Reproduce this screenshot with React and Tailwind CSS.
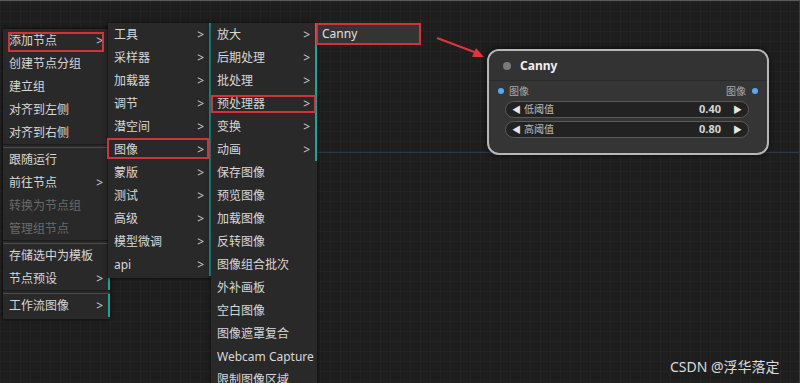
import React from "react";

const font = { fontFamily: '"Noto Sans", "Noto Sans CJK SC", sans-serif' };

const menu1 = [
  { label: "添加节点", sub: true },
  { label: "创建节点分组" },
  { label: "建立组" },
  { label: "对齐到左侧" },
  { label: "对齐到右侧" },
  { sep: true },
  { label: "跟随运行" },
  { label: "前往节点", sub: true },
  { label: "转换为节点组", disabled: true },
  { label: "管理组节点", disabled: true },
  { sep: true },
  { label: "存储选中为模板" },
  { label: "节点预设", sub: true },
  { sep: true },
  { label: "工作流图像", sub: true },
];

const menu2 = ["工具", "采样器", "加载器", "调节", "潜空间", "图像", "蒙版", "测试", "高级", "模型微调", "api"].map(
  (label) => ({ label, sub: true })
);

const menu3 = [
  { label: "放大", sub: true },
  { label: "后期处理", sub: true },
  { label: "批处理", sub: true },
  { label: "预处理器", sub: true },
  { label: "变换", sub: true },
  { label: "动画", sub: true },
  { label: "保存图像" },
  { label: "预览图像" },
  { label: "加载图像" },
  { label: "反转图像" },
  { label: "图像组合批次" },
  { label: "外补画板" },
  { label: "空白图像" },
  { label: "图像遮罩复合" },
  { label: "Webcam Capture" },
  { label: "限制图像区域" },
];

const MenuItem = ({ item }) => {
  if (item.sep) {
    return <div className="h-[4px] border-t border-[#1a1a1a] border-b border-b-[#4a4a4a]" />;
  }
  return (
    <div
      className={`h-[23px] flex items-center pl-[6px] pr-[5px] text-[12px] whitespace-nowrap ${
        item.disabled ? "text-[#6a6a6a]" : "text-[#d8d8d8]"
      } ${item.sub ? "border-r-2 border-[#18a59c]" : ""}`}
    >
      <span>{item.label}</span>
      {item.sub && <span className="ml-auto text-[12px] text-[#cfcfcf]">&gt;</span>}
    </div>
  );
};

const Menu = ({ items, className }) => (
  <div className={`absolute bg-[#292929] shadow-[0_0_4px_rgba(0,0,0,0.8)] ${className}`}>
    {items.map((it, i) => (
      <MenuItem key={i} item={it} />
    ))}
  </div>
);

const RedBox = ({ className }) => (
  <div className={`absolute border-2 border-[#d2333a] pointer-events-none ${className}`} />
);

const Widget = ({ label, value }) => (
  <div className="h-[17px] rounded-full bg-[#222222] border border-[#5a5a5a] flex items-center px-[6px] text-[10px] text-[#bdbdbd]">
    <span className="text-[9px] text-[#e6e6e6]">◀</span>
    <span className="ml-[3px]">{label}</span>
    <span className="ml-auto text-[11px] font-bold text-[#d6d6d6]">{value}</span>
    <span className="ml-[12px] text-[9px] text-[#e6e6e6]">▶</span>
  </div>
);

export default function App() {
  return (
    <div
      className="relative w-[800px] h-[383px] overflow-hidden bg-[#1e1e1e] bg-[linear-gradient(rgba(255,255,255,0.025)_1px,transparent_1px),linear-gradient(90deg,rgba(255,255,255,0.025)_1px,transparent_1px)] bg-[size:10px_10px] border-t border-[#5a5a5a] border-r border-r-[#3a3a3a]"
      style={font}
    >
      {/* link line */}
      <div className="absolute left-[317px] right-0 top-[151px] h-px bg-[#2c3a48]" />

      <Menu items={menu1} className="left-[3px] top-[28px] w-[107px] pb-[2px]" />
      <Menu items={menu2} className="left-[108px] top-[22px] w-[103px] pb-[2px]" />
      <Menu items={menu3} className="left-[211px] top-[22px] w-[106px]" />
      <div className="absolute left-[316px] top-[22px] w-[104px] h-[21px] bg-[#343434] flex items-center pl-[6px] text-[12px] text-[#e0e0e0]">
        Canny
      </div>

      <RedBox className="left-[8px] top-[31px] w-[96px] h-[20px]" />
      <RedBox className="left-[107px] top-[137px] w-[102px] h-[21px]" />
      <RedBox className="left-[211px] top-[94px] w-[105px] h-[18px]" />
      <RedBox className="left-[316px] top-[22px] w-[105px] h-[22px]" />

      <svg className="absolute left-[430px] top-[30px]" width="60" height="32" viewBox="0 0 60 32">
        <line x1="7" y1="7" x2="47" y2="22" stroke="#e03535" strokeWidth="2" />
        <polygon points="54,26 42,26 46,17" fill="#e03535" />
      </svg>

      {/* node */}
      <div className="absolute left-[487px] top-[48px] w-[282px] h-[106px] rounded-[12px] border-2 border-[#b8b8b8] bg-[#353535] shadow-[0_0_6px_rgba(0,0,0,0.7)]">
        <div className="h-[30px] flex items-center pl-[14px] border-b border-[#2a2a2a] bg-[#333333] rounded-t-[10px]">
          <span className="w-[8px] h-[8px] rounded-full bg-[#7a7a7a]" />
          <span className="ml-[9px] text-[12px] font-bold text-[#f0f0f0]">Canny</span>
        </div>
        <div className="h-[20px] flex items-center pl-[9px] pr-[9px] text-[10px] text-[#a8a8a8]">
          <span className="w-[6px] h-[6px] rounded-full bg-[#5aa8ee]" />
          <span className="ml-[5px]">图像</span>
          <span className="ml-auto">图像</span>
          <span className="ml-[6px] w-[6px] h-[6px] rounded-full bg-[#5aa8ee]" />
        </div>
        <div className="flex flex-col gap-[3px] px-[16px] pr-[18px]">
          <Widget label="低阈值" value="0.40" />
          <Widget label="高阈值" value="0.80" />
        </div>
      </div>

      <div className="absolute left-[670px] top-[355px] text-[14px] text-[#dcdcdc] whitespace-nowrap">CSDN @浮华落定</div>
    </div>
  );
}
